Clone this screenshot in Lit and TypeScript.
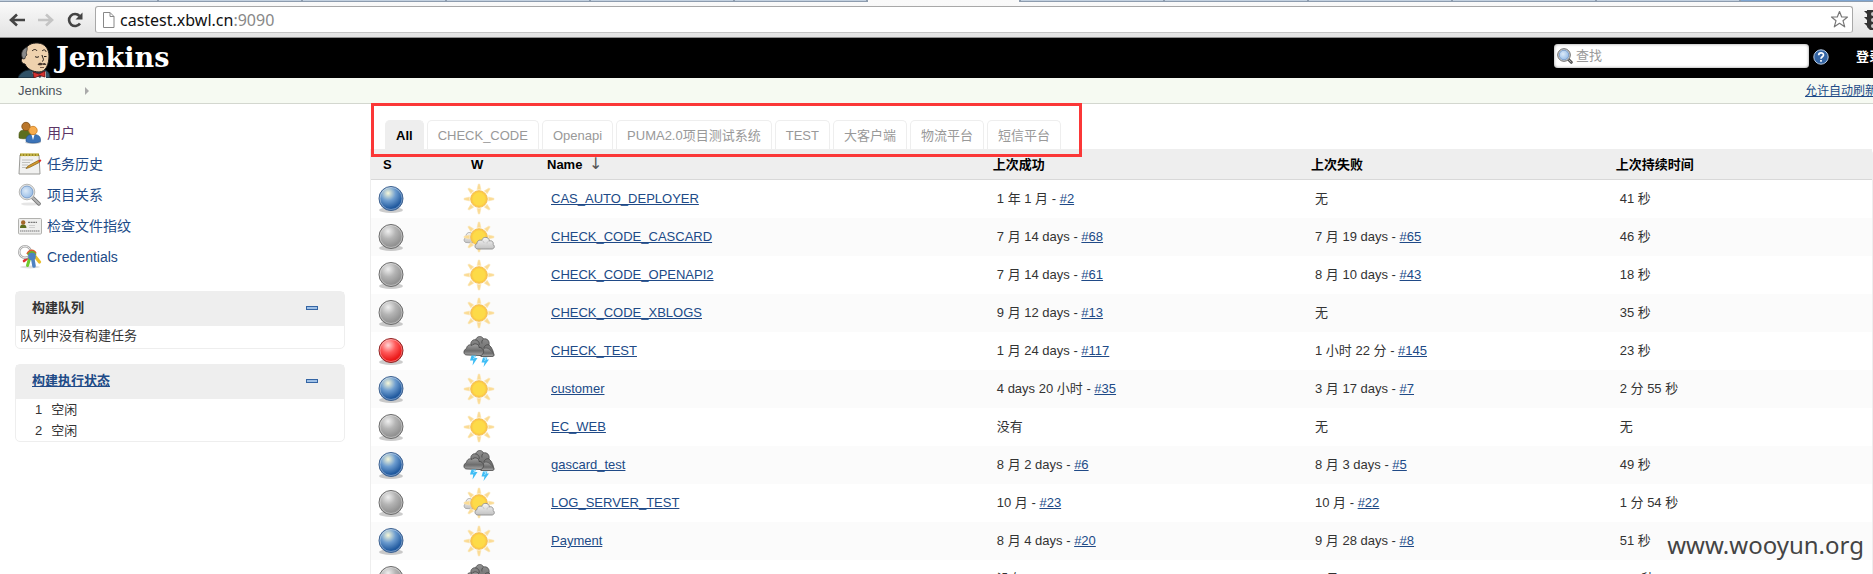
import { LitElement, html, css, svg } from "lit";
import { customElement } from "lit/decorators.js";

type Build = { age: string; no?: string };
type Job = { ball: string; weather: string; name: string; ok: Build; fail: Build; time: string };

const b = (age: string, no?: string): Build => ({ age, no });

const jobs: Job[] = [
  { ball: "blue", weather: "sun", name: "CAS_AUTO_DEPLOYER", ok: b("1 年 1 月", "#2"), fail: b("无"), time: "41 秒" },
  { ball: "grey", weather: "partly", name: "CHECK_CODE_CASCARD", ok: b("7 月 14 days", "#68"), fail: b("7 月 19 days", "#65"), time: "46 秒" },
  { ball: "grey", weather: "sun", name: "CHECK_CODE_OPENAPI2", ok: b("7 月 14 days", "#61"), fail: b("8 月 10 days", "#43"), time: "18 秒" },
  { ball: "grey", weather: "sun", name: "CHECK_CODE_XBLOGS", ok: b("9 月 12 days", "#13"), fail: b("无"), time: "35 秒" },
  { ball: "red", weather: "storm", name: "CHECK_TEST", ok: b("1 月 24 days", "#117"), fail: b("1 小时 22 分", "#145"), time: "23 秒" },
  { ball: "blue", weather: "sun", name: "customer", ok: b("4 days 20 小时", "#35"), fail: b("3 月 17 days", "#7"), time: "2 分 55 秒" },
  { ball: "grey", weather: "sun", name: "EC_WEB", ok: b("没有"), fail: b("无"), time: "无" },
  { ball: "blue", weather: "storm", name: "gascard_test", ok: b("8 月 2 days", "#6"), fail: b("8 月 3 days", "#5"), time: "49 秒" },
  { ball: "grey", weather: "partly", name: "LOG_SERVER_TEST", ok: b("10 月", "#23"), fail: b("10 月", "#22"), time: "1 分 54 秒" },
  { ball: "blue", weather: "sun", name: "Payment", ok: b("8 月 4 days", "#20"), fail: b("9 月 28 days", "#8"), time: "51 秒" },
  { ball: "grey", weather: "storm", name: "PUMA2_TEST", ok: b("没有"), fail: b("9 月 15 days", "#8"), time: "5.3 秒" },
];

const views = ["All", "CHECK_CODE", "Openapi", "PUMA2.0项目测试系统", "TEST", "大客户端", "物流平台", "短信平台"];

const tasks = [
  { icon: "users", label: "用户", visited: true },
  { icon: "notepad", label: "任务历史" },
  { icon: "search", label: "项目关系" },
  { icon: "idcard", label: "检查文件指纹" },
  { icon: "keys", label: "Credentials" },
];

const ball = (id: string, light: string, mid: string, dark: string, rim: string) => svg`
  <radialGradient id="g-${id}" cx="0.38" cy="0.28" r="0.7">
    <stop offset="0" stop-color=${light} /><stop offset="0.45" stop-color=${mid} /><stop offset="0.9" stop-color=${dark} />
  </radialGradient>
  <symbol id=${id} viewBox="0 0 32 32">
    <ellipse cx="16" cy="27" rx="12" ry="3" fill="#000" opacity="0.2" />
    <circle cx="16" cy="15.500" r="12" fill="url(#g-${id})" stroke=${rim} stroke-width="1" />
    <circle cx="16" cy="15.500" r="11" fill="none" stroke="#fff" stroke-opacity="0.35" />
  </symbol>`;

const rays = [0, 45, 90, 135, 180, 225, 270, 315];
const sun = svg`
  ${rays.map((r) => svg`<path d="M14 6.500 15.300 1H16.700L18 6.500Z" fill="#fbdb93" stroke="#fbe6b5" stroke-width="0.6" transform="rotate(${r} 16 16)" />`)}
  <circle cx="16" cy="16" r="8.300" fill="url(#g-sun)" stroke="#f6c052" stroke-width="1" />
  <circle cx="16" cy="16" r="6.400" fill="#fddb48" opacity="0.8" />`;

const sprite = svg`
  <defs>
    ${ball("blue", "#f6f7d8", "#6c9ccf", "#215a9f", "#3f6290")}
    ${ball("grey", "#efefef", "#b4b4b4", "#929292", "#6b6b6b")}
    ${ball("red", "#ffd6d6", "#ff5a5a", "#ea1818", "#8e2424")}
    <radialGradient id="g-sun" cx="0.5" cy="0.5" r="0.5">
      <stop offset="0.6" stop-color="#fddb48" /><stop offset="1" stop-color="#fcc444" />
    </radialGradient>
    <linearGradient id="g-cloud" x1="0" y1="0" x2="0" y2="1">
      <stop offset="0" stop-color="#f6f6f6" /><stop offset="1" stop-color="#c2c2c2" />
    </linearGradient>
    <linearGradient id="g-dark" x1="0" y1="0" x2="0" y2="1">
      <stop offset="0" stop-color="#909090" /><stop offset="1" stop-color="#606060" />
    </linearGradient>
    <linearGradient id="g-dark2" x1="0" y1="0" x2="0" y2="1">
      <stop offset="0" stop-color="#a2a2a2" /><stop offset="0.6" stop-color="#6c6c6c" /><stop offset="1" stop-color="#aaa" />
    </linearGradient>
    <radialGradient id="g-lens" cx="0.4" cy="0.4" r="0.7">
      <stop offset="0" stop-color="#dceaf8" /><stop offset="1" stop-color="#8fb7e4" />
    </radialGradient>

    <symbol id="sun" viewBox="0 0 32 32">${sun}</symbol>

    <symbol id="partly" viewBox="0 0 32 32">
      <path d="M3 21.500C0.500 21 0.500 17 3 16.500C2.500 13 5 10.500 8 12C10 12.500 11 15 10 17V22Z" fill="url(#g-cloud)" stroke="#a0a0a0" stroke-width="0.8" />
      ${sun}
      <path d="M15 28C11.500 28 11 23.500 14 22.500C14 19.500 17 18.500 18.500 19.500C20 15 26 15.500 26.500 20C29 19 31 21.500 30 23.500C32.500 25 31 28 29 28Z" fill="url(#g-cloud)" stroke="#8c8c8c" stroke-width="0.9" />
      <path d="M18.500 19.500C20 19.500 21 21 21 22M26.500 20C25 20 24 21 24 22.500" fill="none" stroke="#bdbdbd" stroke-width="0.8" />
    </symbol>

    <symbol id="storm" viewBox="0 0 32 32">
      <path d="M8 10C7 6 11 4 12.500 5C14 0.500 19 0.500 20.500 4C24 3 27 6 26 10C29 12 30.500 17 31 20C31 21.500 29 21.500 28 21.500H18Z" fill="url(#g-dark)" stroke="#4b4b4b" stroke-width="0.8" />
      <path d="M12.500 5C15 5 17 8 16 10M20.500 4C19 5 18.500 7 19 8.500M26 10C24 9 21 11 21 13" fill="none" stroke="#454545" stroke-width="0.8" />
      <path d="M18 21.500C18 17 20 13 23 13C26 13 30 17 31 20C31 21.500 29 21.500 28 21.500Z" fill="url(#g-dark2)" stroke="#555" stroke-width="0.7" />
      <path d="M4 20C0 20 0 15 3.500 13.500C4 10 7 9 9 10.500C11 7.500 16.500 9 16 12.500C19 12 22 16 20 18.500C19.500 20 18 20.500 17 20.500Z" fill="url(#g-dark2)" stroke="#444" stroke-width="0.8" />
      <path d="M8.500 20.500H13L12 23H14.500L9.500 30.500L10.300 25.500H7Z" fill="#3fbdf5" />
      <path d="M20 22.500H24.500L23.500 24.500H26L20.500 32L21.500 27.500H18.500Z" fill="#3fbdf5" />
      <path d="M10.500 21.500H12L10.500 24M21.500 23.500H23L21.500 26" fill="none" stroke="#b7e8ff" stroke-width="0.8" />
    </symbol>

    <symbol id="users" viewBox="0 0 24 24">
      <path d="M1 14C1 10 3 9 8 9C12 9 13 11 13 14V17C9 18 3 18 1 17Z" fill="#5c6e1e" stroke="#46560f" stroke-width="0.6" />
      <circle cx="8" cy="5.500" r="4.200" fill="#b9762b" stroke="#7a4a12" stroke-width="0.8" />
      <ellipse cx="15" cy="21.500" rx="8" ry="1.500" fill="#000" opacity="0.2" />
      <path d="M8 19C8 14.500 11 13.500 15 13.500C20 13.500 22.500 15 22.500 19V20.500C18 22.500 12 22.500 8 20.500Z" fill="#3b73b8" stroke="#27558f" stroke-width="0.6" />
      <path d="M13.500 13.800 15 19 16.500 13.800Z" fill="#fff" />
      <circle cx="15" cy="9.500" r="4.200" fill="#f7ac4d" stroke="#c87a1e" stroke-width="0.8" />
    </symbol>

    <symbol id="notepad" viewBox="0 0 24 24">
      <path d="M2 3H21L22 22H1Z" fill="#f1f1f0" stroke="#9b9b98" />
      <path d="M2 1.500H21V4H2Z" fill="#9a8a22" />
      <path d="M4 1V4.500M7 1V4.500M10 1V4.500M13 1V4.500M16 1V4.500M19 1V4.500" stroke="#e5d46b" stroke-width="1" />
      <path d="M4 8H15M4 10.500H12M4 13H10M4 15.500H9" stroke="#c0c0bd" />
      <path d="M8 16.500 10 14 20.500 8.300 21.500 10.300 11.500 15.500Z" fill="#d89b2c" stroke="#7d5c15" stroke-width="0.7" />
      <path d="M20.500 8.300 22.500 7.500C23.800 8 23.600 9.400 21.500 10.300Z" fill="#e02a2a" />
    </symbol>

    <symbol id="search" viewBox="0 0 24 24">
      <ellipse cx="12" cy="21" rx="9" ry="1.600" fill="#000" opacity="0.1" />
      <path d="M14.500 14.500 21 20.800" stroke="#777" stroke-width="3.800" stroke-linecap="round" />
      <path d="M14.500 14.500 21 20.800" stroke="#b5b5b5" stroke-width="2" stroke-linecap="round" />
      <circle cx="9" cy="9" r="7.800" fill="#e8e8e6" stroke="#a8a8a6" stroke-width="0.8" />
      <circle cx="9" cy="9" r="6" fill="url(#g-lens)" stroke="#6d93c4" stroke-width="0.8" />
    </symbol>

    <symbol id="find" viewBox="0 0 16 16">
      <path d="M11 11 14.300 14.300" stroke="#555" stroke-width="3" stroke-linecap="round" />
      <path d="M11.500 11.500 14 14" stroke="#aaa" stroke-width="1" stroke-linecap="round" />
      <circle cx="7" cy="7" r="6.300" fill="#d8d8d6" stroke="#666" stroke-width="1" />
      <circle cx="7" cy="7" r="4.800" fill="url(#g-lens)" stroke="#6d93c4" stroke-width="0.8" />
    </symbol>

    <symbol id="idcard" viewBox="0 0 24 24">
      <rect x="0.500" y="4.500" width="23" height="15.500" rx="1" fill="#efefee" stroke="#b1b1ae" />
      <path d="M2 14C2 11 3.500 10.500 5 10.500C7 10.500 8.500 11.500 8.500 14Z" fill="#5c6e1e" />
      <circle cx="5.200" cy="8.500" r="2.200" fill="#a4682a" />
      <path d="M10 8.300H19" stroke="#777" stroke-width="1.200" stroke-dasharray="2 0.600" />
      <path d="M11 11.500H17M11 13.500H17" stroke="#cfcfcf" />
      <path d="M2 17H22" stroke="#777" stroke-width="1.200" stroke-dasharray="1.500 0.500" />
    </symbol>

    <symbol id="keys" viewBox="0 0 24 24">
      <ellipse cx="12" cy="22" rx="10" ry="1.500" fill="#000" opacity="0.12" />
      <path d="M16 10 21.500 17" stroke="#e8be2d" stroke-width="3.200" stroke-linecap="round" />
      <path d="M11 12 6 16" stroke="#e03030" stroke-width="2.600" stroke-linecap="round" />
      <path d="M12 12 9.500 20.500" stroke="#6fc92e" stroke-width="3" stroke-linecap="round" />
      <circle cx="7" cy="7" r="5.800" fill="none" stroke="#a6a6a6" stroke-width="2.400" />
      <circle cx="7" cy="7" r="5.800" fill="none" stroke="#e6e6e6" stroke-width="1" />
      <path d="M9 9C11 4.500 16 4 18 8.500" stroke="#e25a32" stroke-width="1.600" fill="none" />
      <path d="M10 10C12 6 16 6 17.500 10" stroke="#66b12f" stroke-width="2" fill="none" />
      <circle cx="14" cy="11.500" r="3.800" fill="#4f81c0" />
      <path d="M14.500 12 16 21" stroke="#4f81c0" stroke-width="3.600" stroke-linecap="round" />
    </symbol>
  </defs>`;

const icon = (name: string, cls: string) =>
  html`<svg class=${cls} aria-hidden="true"><use href="#${name}"></use></svg>`;

@customElement("app-root")
export class AppRoot extends LitElement {
  static styles = css`
    :host {
      display: block;
      position: relative;
      height: 100vh;
      overflow: hidden;
      background: #fff;
      color: #333;
      font: 13px/18px "Liberation Sans", "Noto Sans CJK SC", sans-serif;
    }
    *, *::before { box-sizing: border-box; }
    a { color: #204a87; }
    svg { display: block; flex: none; }
    .sprite { position: absolute; width: 0; height: 0; }

    .strip { display: flex; height: 2px; background: #c3d1e0; border-bottom: 1px solid #8d9cae; }
    .strip span { flex: 0 0 144px; border-right: 2px solid #8d9cae; }
    .strip .edge { flex-basis: 159px; }
    .strip .wide { flex-basis: 133px; }
    .strip .current { flex-basis: 153px; height: 2px; background: #f9f9f9; }
    .strip .frame { flex: 1; border: 0; background: #7fa6d2; }

    .toolbar {
      display: flex; align-items: center; height: 36px; padding: 0 0 0 8px;
      background: linear-gradient(#fafafa, #e3e3e3); border-bottom: 1px solid #8f8f8f; overflow: hidden;
    }
    .nav { width: 18px; height: 18px; margin-right: 11px; padding: 0; border: 0; background: none; }
    .nav svg { width: 18px; height: 18px; }
    .address {
      flex: 1; display: flex; align-items: center; height: 27px; padding: 0 3px 0 6px;
      background: #fff; border: 1px solid #a8a8a8; border-bottom-color: #c4c4c4; border-radius: 3px;
    }
    .page { width: 13px; height: 16px; margin-right: 5px; }
    .url { flex: 1; font: 16px/24px "Noto Sans", "Open Sans", sans-serif; color: #111; }
    .port { color: #888; }
    .star { width: 19px; height: 19px; }
    .menu { width: 18px; height: 20px; margin: 0 -9px 0 11px; }

    .head { display: flex; align-items: flex-start; height: 40px; padding-left: 18px; background: #000; overflow: hidden; }
    .brand { display: flex; flex: 1; color: #fff; text-decoration: none; }
    .butler { width: 34px; height: 36px; margin-top: 4px; }
    .wordmark { margin-left: 4px; font: bold 27px/40px "DejaVu Serif", serif; }
    .search {
      display: flex; align-items: center; width: 255px; height: 24px; margin-top: 6px; padding-left: 3px;
      background: #fff; border-radius: 4px; box-shadow: inset 0 0 3px #888;
    }
    .lens { width: 16px; height: 16px; margin-right: 3px; }
    .search input { flex: 1; min-width: 0; padding: 0; border: 0; outline: 0; background: none; font: inherit; }
    .search input::placeholder { color: #999; opacity: 1; }
    .help { width: 16px; height: 16px; margin: 11px 27px 0 4px; }
    .login { margin: 10px -9px 0 0; color: #fff; font-weight: bold; text-decoration: none; white-space: nowrap; }

    .crumbs {
      display: flex; align-items: center; height: 26px; padding-left: 18px;
      background: #f6faf2; border-bottom: 1px solid #d3d7cf; overflow: hidden;
    }
    .crumbs .root { color: #4d545d; text-decoration: none; }
    .arrow { margin-left: 23px; border: 4px solid transparent; border-left-color: #aaa; border-right: 0; }
    .refresh { margin: 0 -4px 0 auto; font-size: 12px; white-space: nowrap; }

    .body { display: flex; align-items: flex-start; }
    .side { flex: none; width: 330px; margin: 13px 25px 0 15px; }
    .tasks { margin: 0 0 19px; padding: 0 0 0 3px; list-style: none; }
    .tasks li { height: 31px; }
    .tasks a { display: inline-flex; align-items: center; gap: 5px; height: 31px; font-size: 14px; text-decoration: none; }
    .tasks .visited { color: #5c3566; }
    .i24 { width: 24px; height: 24px; }
    .i32 { width: 32px; height: 32px; }

    .pane { margin: 0 0 15px; border: 1px solid #eee; border-radius: 5px; }
    .pane h2 {
      display: flex; align-items: center; justify-content: space-between; height: 34px; margin: 0;
      padding: 0 26px 2px 16px; background: #eee; font-size: 13px; line-height: 18px;
    }
    .fold { width: 12px; height: 4px; padding: 0; background: #9fc0e6; border: 1px solid #3465a4; }
    .pane p { margin: 0; padding: 1px 4px 3px; }
    .pane ol { margin: 0; padding: 0 0 0 19px; list-style: none; }
    .pane li { display: flex; gap: 9px; height: 21px; line-height: 21px; }

    .main { flex: 1; min-width: 0; margin: 16px 0 0; }
    .tabs { display: flex; gap: 3px; padding-left: 15px; }
    .tabs a {
      height: 29px; padding: 6px 10px 0; border: 1px solid #eee; border-bottom: 0;
      border-radius: 5px 5px 0 0; color: #999; text-decoration: none; white-space: nowrap;
    }
    .tabs .on { background: #eee; color: #000; font-weight: bold; }

    .jobs {
      width: 100%; table-layout: fixed; border-collapse: separate; border-spacing: 0;
      border: 1px solid #eee; border-top: 0; border-radius: 0 5px 0 0;
    }
    .jobs .c-icon { width: 88px; }
    .jobs .c-name { width: 29.7%; }
    .jobs .c-ok { width: 21.2%; }
    .jobs .c-fail { width: 20.3%; }
    .jobs th { height: 31px; padding: 1px 0 0; background: #eee; border-bottom: 1px solid #d8d8d8; color: #000; text-align: left; }
    .jobs th:nth-child(-n + 2) { padding-left: 12px; }
    .sort { margin-left: 3px; color: #555; font: 16px/16px "DejaVu Sans", sans-serif; }
    .jobs td { height: 38px; padding: 3px 4px; white-space: nowrap; }
    .jobs tbody tr:nth-child(even) td { background: #fbfbfb; }

    .callout { position: absolute; left: 371px; top: 103px; width: 711px; height: 54px; border: 3px solid #fb3737; pointer-events: none; }
    .watermark { position: absolute; right: 9px; bottom: 12px; font: 24px/34px "Noto Sans", sans-serif; color: #444; }
  `;

  private build(v: Build) {
    return v.no ? html`${v.age} - <a href="#">${v.no}</a>` : v.age;
  }

  render() {
    return html`
      <svg class="sprite" aria-hidden="true">${sprite}</svg>

      <div class="strip">
        <span class="edge"></span><span></span><span></span><span></span><span></span><span class="wide"></span>
        <span class="current"></span><span></span><span></span><span></span><span></span><span></span><span class="frame"></span>
      </div>
      <div class="toolbar">
        <button class="nav" aria-label="Back">
          <svg viewBox="0 0 18 18"><path d="M17 9H4M9 3.500 3 9 9 14.500" fill="none" stroke="#444" stroke-width="2.600" /></svg>
        </button>
        <button class="nav" aria-label="Forward">
          <svg viewBox="0 0 18 18"><path d="M1 9H14M9 3.500 15 9 9 14.500" fill="none" stroke="#c4c4c4" stroke-width="2.600" /></svg>
        </button>
        <button class="nav" aria-label="Reload">
          <svg viewBox="0 0 18 18"><path d="M14 12.500A6 6 0 1 1 13.500 5" fill="none" stroke="#444" stroke-width="2.600" /><path d="M16.500 1.500V8.500H9.500Z" fill="#444" /></svg>
        </button>
        <div class="address">
          <svg class="page" viewBox="0 0 13 16"><path d="M1.500 0.500H8L12 4.500V15.500H1.500ZM8 0.500V4.500H12" fill="#fff" stroke="#888" /></svg>
          <div class="url">castest.xbwl.cn<span class="port">:9090</span></div>
          <svg class="star" viewBox="0 0 19 19"><path d="M9.500 1.500 11.700 7H17.500L13 10.700 14.700 16.800 9.500 13.300 4.300 16.800 6 10.700 1.500 7H7.300Z" fill="#fff" stroke="#777" stroke-width="1.200" stroke-linejoin="round" /></svg>
        </div>
        <svg class="menu" viewBox="0 0 18 20"><path d="M3 0H15V17L12 20H6L3 17ZM0 1H4V5ZM0 7H4V11ZM0 13H4V17ZM14 1H18L14 5ZM14 7H18L14 11ZM14 13H18L14 17Z" fill="#333" /><circle cx="9" cy="4" r="2" fill="#ccc" /><circle cx="9" cy="10" r="2" fill="#ccc" /><circle cx="9" cy="16" r="2" fill="#ccc" /></svg>
      </div>

      <header class="head">
        <a class="brand" href="#">
          <svg class="butler" viewBox="0 0 34 36">
            <path d="M0 36C1 32 5 29 10 28L24 27C29 28 32 30 32 36Z" fill="#2f5166" stroke="#12222c" />
            <path d="M14 30 22 36 28 29V36H17Z" fill="#eee" />
            <path d="M6 12C7 3 14 0.500 20 1C27 1.500 31 7 31 14C31 22 28 30 21 30C15 30 9 27 7 22C3 22 2 16 6 16Z" fill="#efd2ae" stroke="#1c1a18" />
            <path d="M5 17C2 12 4 7 9 5C10 9 7 10 9 13C7 14 7.500 15 7 16.500Z" fill="#8a8a8a" stroke="#2a2a2a" stroke-width="0.800" />
            <path d="M14 9C16 7 18 7 19 9M24 9C26 7 28 8 28 10M17 14.500C18 15.500 20 15.500 21 14.500M26 14.500H28.500M24 13C24.500 16 27 18 24 19.500" fill="none" stroke="#231c17" stroke-width="1" />
            <path d="M19.500 22.500C21 20.500 23 20.500 24.500 21.500C26 20.500 27.500 21 28.500 22.500C27 23.500 25.500 23 24.500 22.500C23 23.800 21 23.500 19.500 22.500Z" fill="#4a3a30" />
            <path d="M22 25.500H26" stroke="#6b4d3c" stroke-width="0.900" />
            <path d="M15 30 21 32 27 29V35L22 33.500 16 36Z" fill="#d4302f" stroke="#5b1010" stroke-width="0.800" />
          </svg>
          <span class="wordmark">Jenkins</span>
        </a>
        <label class="search">
          ${icon("find", "lens")}
          <input type="text" placeholder="查找" aria-label="查找" />
        </label>
        <svg class="help" viewBox="0 0 16 16">
          <circle cx="8" cy="8" r="7.200" fill="#3465a4" stroke="#b7cbe4" />
          <path d="M5.700 6.300C5.700 3.200 10.500 3.200 10.500 6C10.500 7.800 8 7.800 8 9.700M8 11V12.800" fill="none" stroke="#fff" stroke-width="1.700" />
        </svg>
        <a class="login" href="#">登录</a>
      </header>

      <nav class="crumbs">
        <a class="root" href="#">Jenkins</a>
        <span class="arrow"></span>
        <a class="refresh" href="#">允许自动刷新</a>
      </nav>

      <div class="body">
        <aside class="side">
          <ul class="tasks">
            ${tasks.map((t) => html`<li><a class=${t.visited ? "visited" : ""} href="#">${icon(t.icon, "i24")}<span>${t.label}</span></a></li>`)}
          </ul>
          <section class="pane">
            <h2>构建队列<button class="fold" aria-label="collapse"></button></h2>
            <p>队列中没有构建任务</p>
          </section>
          <section class="pane">
            <h2><a href="#">构建执行状态</a><button class="fold" aria-label="collapse"></button></h2>
            <ol>
              <li><span>1</span><span>空闲</span></li>
              <li><span>2</span><span>空闲</span></li>
            </ol>
          </section>
        </aside>

        <main class="main">
          <nav class="tabs">
            ${views.map((v, i) => html`<a class=${i === 0 ? "on" : ""} href="#">${v}</a>`)}
          </nav>
          <table class="jobs">
            <colgroup>
              <col class="c-icon" /><col class="c-icon" /><col class="c-name" /><col class="c-ok" /><col class="c-fail" /><col />
            </colgroup>
            <thead>
              <tr>
                <th>S</th><th>W</th><th>Name <span class="sort">↓</span></th><th>上次成功</th><th>上次失败</th><th>上次持续时间</th>
              </tr>
            </thead>
            <tbody>
              ${jobs.map((j) => html`
                <tr>
                  <td>${icon(j.ball, "i32")}</td>
                  <td>${icon(j.weather, "i32")}</td>
                  <td><a href="#">${j.name}</a></td>
                  <td>${this.build(j.ok)}</td>
                  <td>${this.build(j.fail)}</td>
                  <td>${j.time}</td>
                </tr>`)}
            </tbody>
          </table>
        </main>
      </div>

      <div class="callout"></div>
      <div class="watermark">www.wooyun.org</div>
    `;
  }
}
